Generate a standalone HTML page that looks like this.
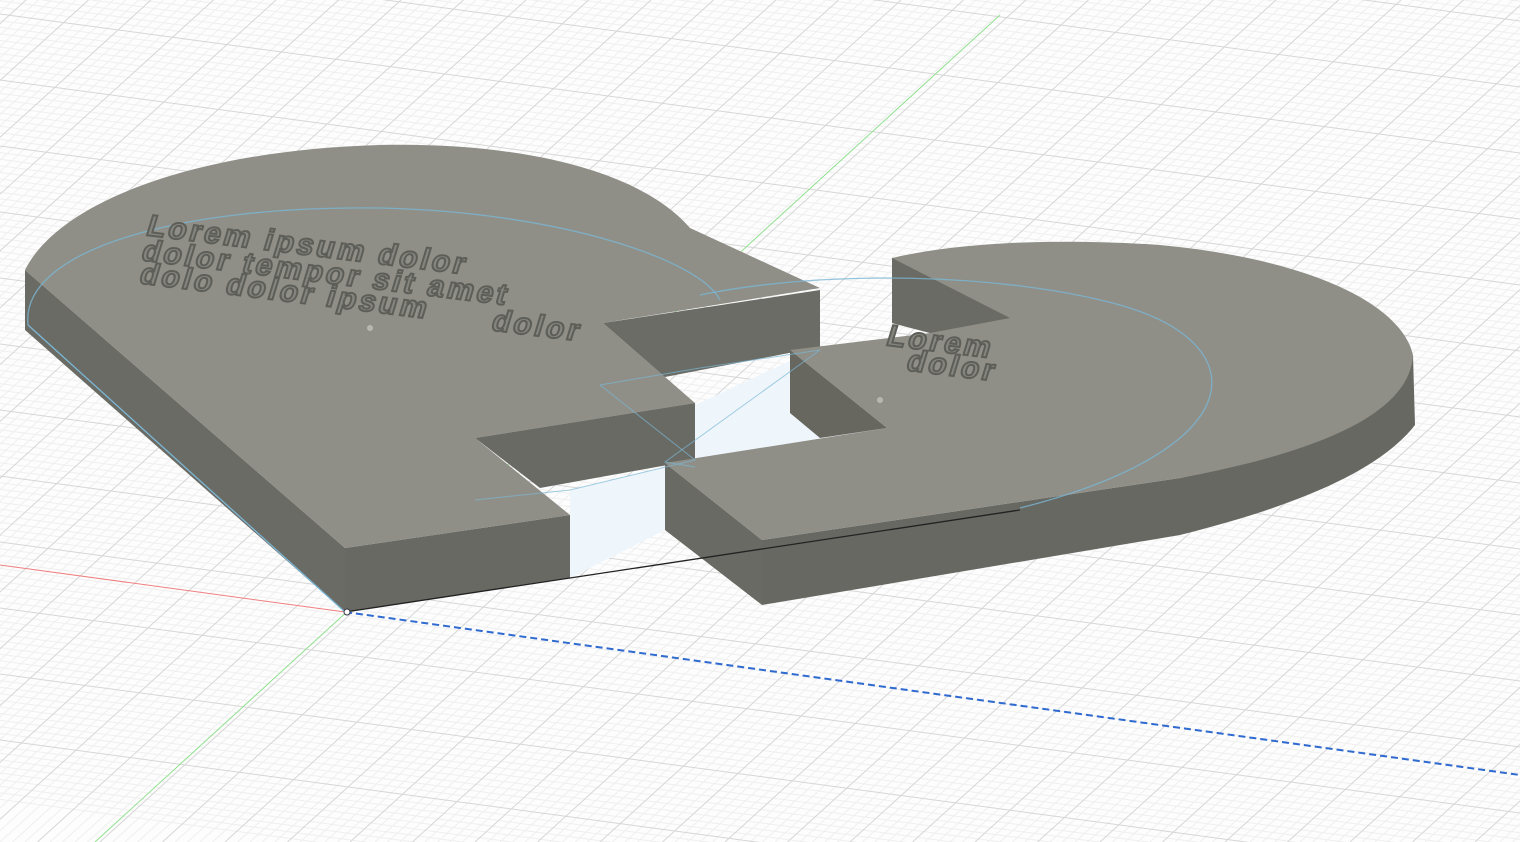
<!DOCTYPE html>
<html><head><meta charset="utf-8"><style>
html,body{margin:0;padding:0;background:#fff;width:1520px;height:842px;overflow:hidden;position:relative}
svg{display:block;position:absolute;left:0;top:0}
text{font-family:"Liberation Sans",sans-serif;font-weight:bold}
</style></head><body>
<svg id="s" width="1520" height="842" viewBox="0 0 1520 842" xmlns="http://www.w3.org/2000/svg">
<rect width="1520" height="842" fill="#fdfdfd"/>
<g id="gmin" stroke="#efefef" stroke-width="1" fill="none"></g>
<g id="gmaj" stroke="#d6d6d6" stroke-width="1" fill="none"></g>
<line x1="0" y1="565" x2="345" y2="612" stroke="#f08080" stroke-width="1"/>
<line x1="95" y1="842" x2="1000" y2="15" stroke="#8fe08f" stroke-width="1"/>
<polygon points="570,490 695,460 695,405 820,347 887,428 665,463 665,530 570,578" fill="#eef6fc"/>
<polygon points="25,270 25,330 345,612 345,548" fill="#6b6b65"/>
<polygon points="345,548 570,515 570,578 345,612" fill="#696963"/>
<path d="M25,270 C60,200 200,150 380,145 C520,142 640,170 690,228 L820,288 L603,323 L695,403 L475,438 L570,515 L345,548 Z" fill="#8f8f88"/>
<polygon points="603,323 820,290 820,347 665,377" fill="#6c6c66"/>
<polygon points="475,438 695,403 695,460 540,488" fill="#6a6a64"/>
<path d="M1413,355 L1415,425 C1380,470 1300,505 1180,535 L762,605 L762,540 L1180,478 C1300,455 1390,420 1413,355 Z" fill="#686862"/>
<polygon points="665,463 762,540 762,605 665,530" fill="#6a6a64"/>
<path d="M892,258 C960,242 1060,238 1160,245 C1300,258 1400,300 1413,355 C1410,410 1330,450 1180,478 L762,540 L665,463 L887,428 L790,350 L930,333 L892,323 Z" fill="#8f8f88"/>
<polygon points="892,258 1010,318 930,333 892,323" fill="#6b6b65"/>
<polygon points="790,350 887,428 820,438 790,413" fill="#67675f"/>
<path d="M28,325 C20,250 180,205 380,208 C560,212 700,260 720,300" stroke="#7ab6d4" stroke-width="1.3" fill="none" opacity="0.8"/>
<path d="M700,295 C820,270 1000,272 1120,305 C1260,345 1250,450 1020,508" stroke="#7ab6d4" stroke-width="1.3" fill="none" opacity="0.8"/>
<polyline points="28,325 345,612" stroke="#7ab6d4" stroke-width="1.3" fill="none"/>
<polyline points="600,385 700,368 820,350 665,462 695,467" stroke="#7ab6d4" stroke-width="1" fill="none" opacity="0.7"/>
<polyline points="475,500 570,490 695,460 600,385" stroke="#7ab6d4" stroke-width="1" fill="none" opacity="0.7"/>
<line x1="345" y1="612" x2="1020" y2="510" stroke="#222" stroke-width="1.3"/>
<line x1="345" y1="612" x2="1520" y2="775" stroke="#2f6ad0" stroke-width="2" stroke-dasharray="7,4"/>
<circle cx="347" cy="612" r="3" fill="#fff" stroke="#334" stroke-width="1"/>
<circle cx="370" cy="328" r="3" fill="#b8b8b2"/>
<circle cx="880" cy="400" r="3" fill="#b8b8b2"/>
<g fill="#858580" stroke="#5e5e58" stroke-width="2" font-size="30" letter-spacing="3">
<text transform="translate(145,235) rotate(7) skewX(-10)">Lorem ipsum dolor</text>
<text transform="translate(140,260) rotate(7) skewX(-10)">dolor tempor sit amet</text>
<text transform="translate(138,283) rotate(7) skewX(-10)">dolo dolor ipsum</text>
<text transform="translate(490,330) rotate(7) skewX(-10)">dolor</text>
<text transform="translate(885,345) rotate(7) skewX(-10)">Lorem</text>
<text transform="translate(905,370) rotate(7) skewX(-10)">dolor</text>
</g>
</svg>
<script>
var mn='',mj='',i;
for(i=-60;i<160;i++){var y=-250+i*6.6;var l='<line x1="0" y1="'+y.toFixed(1)+'" x2="1520" y2="'+(y+205).toFixed(1)+'"/>';if(i%10==0)mj+=l;else mn+=l;}
for(i=-70;i<260;i++){var x=-900+i*12.5;var l='<line x1="'+x+'" y1="842" x2="'+(x+926)+'" y2="0"/>';if(i%5==0)mj+=l;else mn+=l;}
document.getElementById('gmin').innerHTML=mn;
document.getElementById('gmaj').innerHTML=mj;
</script>
</body></html>
